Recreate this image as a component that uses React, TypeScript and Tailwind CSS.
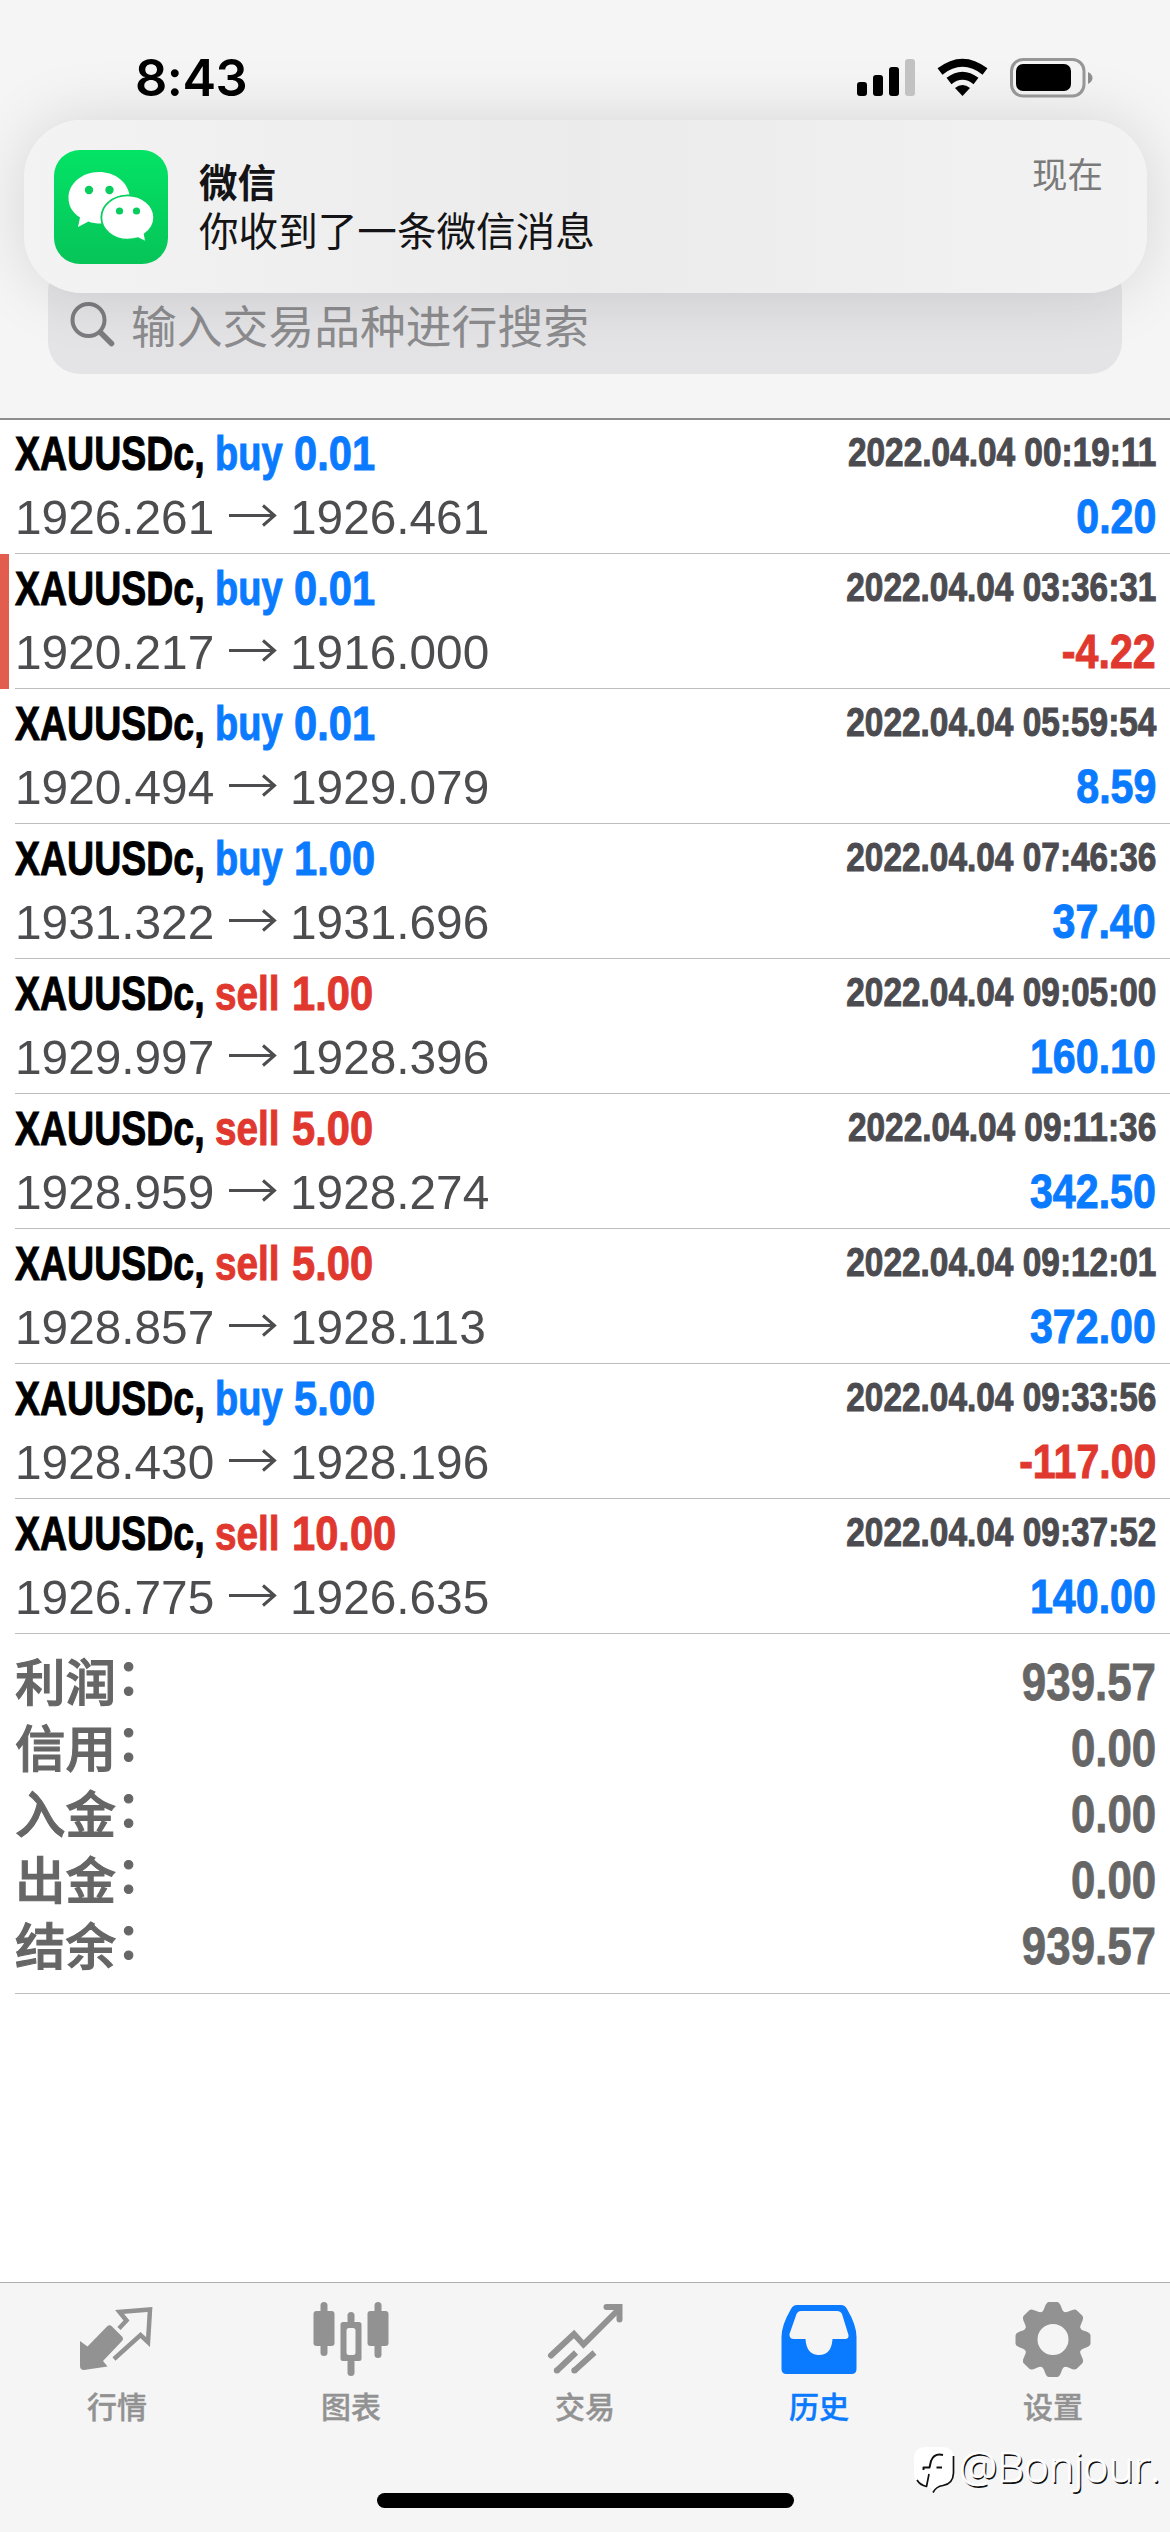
import type { ReactNode } from 'react';

type Trade = { side: 'buy' | 'sell'; lot: string; from: string; to: string; time: string; profit: string; flagged?: boolean };

const trades: Trade[] = [
  { side: 'buy', lot: '0.01', from: '1926.261', to: '1926.461', time: '2022.04.04 00:19:11', profit: '0.20' },
  { side: 'buy', lot: '0.01', from: '1920.217', to: '1916.000', time: '2022.04.04 03:36:31', profit: '-4.22', flagged: true },
  { side: 'buy', lot: '0.01', from: '1920.494', to: '1929.079', time: '2022.04.04 05:59:54', profit: '8.59' },
  { side: 'buy', lot: '1.00', from: '1931.322', to: '1931.696', time: '2022.04.04 07:46:36', profit: '37.40' },
  { side: 'sell', lot: '1.00', from: '1929.997', to: '1928.396', time: '2022.04.04 09:05:00', profit: '160.10' },
  { side: 'sell', lot: '5.00', from: '1928.959', to: '1928.274', time: '2022.04.04 09:11:36', profit: '342.50' },
  { side: 'sell', lot: '5.00', from: '1928.857', to: '1928.113', time: '2022.04.04 09:12:01', profit: '372.00' },
  { side: 'buy', lot: '5.00', from: '1928.430', to: '1928.196', time: '2022.04.04 09:33:56', profit: '-117.00' },
  { side: 'sell', lot: '10.00', from: '1926.775', to: '1926.635', time: '2022.04.04 09:37:52', profit: '140.00' },
];

const totals = [
  ['利润', '939.57'],
  ['信用', '0.00'],
  ['入金', '0.00'],
  ['出金', '0.00'],
  ['结余', '939.57'],
];

function StatusBar() {
  return (
    <div className="relative z-10 flex h-[120px] items-start justify-between pt-[58px] pr-[77px] pl-[135px]">
      <div className="font-['Inter'] text-[50.5px] leading-[39px] font-semibold tracking-[-0.5px]">8:43</div>
      <svg className="h-[40px] w-[236px]" viewBox="856 58 236 40">
        <rect x="856" y="82" width="10" height="14" rx="3" />
        <rect x="872" y="75" width="10" height="21" rx="3" />
        <rect x="888" y="67" width="10" height="29" rx="3" />
        <rect x="904" y="59" width="10" height="37" rx="3" fill="#c2c2c2" />
        <g fill="none" stroke="#000" strokeWidth="8">
          <path d="M939 71.5 Q961.5 54 984 71.5" />
          <path d="M948 81 Q961.5 70.5 975 81" />
        </g>
        <path d="M954 88 Q961.5 82 969 88 L961.5 96 Z" />
        <rect x="1010.5" y="59.5" width="72.5" height="36.5" rx="11.5" fill="none" stroke="#969696" strokeWidth="3" />
        <rect x="1015" y="64" width="55" height="27" rx="7" />
        <path d="M1087 72 Q1091.5 74.5 1091.5 78 Q1091.5 81.5 1087 84 Z" fill="#8d8d8d" />
      </svg>
    </div>
  );
}

function WeChatIcon() {
  return (
    <svg className="h-[114px] w-[114px] shrink-0" viewBox="0 0 114 114">
      <defs>
        <linearGradient id="wc" x1="0" y1="0" x2="0" y2="1">
          <stop offset="0" stopColor="#04e366" />
          <stop offset="1" stopColor="#06c458" />
        </linearGradient>
      </defs>
      <rect width="114" height="114" rx="26" fill="url(#wc)" />
      <path fill="#fff" d="M45 22 C28 22 14.5 33.5 14.5 48 C14.5 56.5 19 63 26 67.5 L24 77 L34.5 71.5 Q39.5 73.5 47.5 73.5 C43 57 57 44.5 75.5 44.5 C73 31 60 22 45 22 Z" />
      <path fill="#fff" stroke="#08cf5e" strokeWidth="1.5" d="M73.5 45.5 C59 45.5 47.5 55.5 47.5 67.5 C47.5 79.5 59 89.5 73.5 89.5 Q79 89.500 84 88 L92 92 L90.500 84 C96.5 80 100 74.5 100 67.5 C100 55.5 88 45.5 73.5 45.5 Z" />
      <g fill="#07cd5d">
        <circle cx="35" cy="40" r="4.2" />
        <circle cx="55.5" cy="40" r="4.2" />
        <circle cx="65.5" cy="61" r="3.6" />
        <circle cx="82.5" cy="61" r="3.6" />
      </g>
    </svg>
  );
}

function Banner() {
  return (
    <div className="absolute top-[120px] left-[24px] flex h-[173px] w-[1123px] rounded-[58px] bg-linear-to-r from-[#f3f3f4] via-[#ebebec] to-[#f3f3f4] pt-[30px] pr-[44px] pl-[30px] shadow-[0_0_64px_rgba(0,0,0,0.13)]">
      <WeChatIcon />
      <div className="ml-[31px] flex-1 pt-[9px] text-[39.6px] leading-[49px] text-[#141416]">
        <div className="text-[38.5px] font-bold">微信</div>
        <div>你收到了一条微信消息</div>
      </div>
      <div className="pt-[2px] text-[35.5px] leading-[49px] text-[#7a7a7a]">现在</div>
    </div>
  );
}

function SearchField() {
  return (
    <div className="mx-[48px] mt-[140px] flex h-[114px] items-end rounded-[32px] bg-[#e4e4e6] pb-[18px] pl-[22px]">
      <svg className="mb-[8px] h-[46px] w-[46px]" viewBox="0 0 46 46" fill="none" stroke="#7c7c80" strokeLinecap="round">
        <circle cx="18.5" cy="18" r="16" strokeWidth="4" />
        <path d="M30.5 30.5 L41.5 41.5" strokeWidth="5.5" />
      </svg>
      <div className="ml-[15px] text-[45.8px] leading-[54px] text-[#8c8c8f]">输入交易品种进行搜索</div>
    </div>
  );
}

function TradeRow({ trade }: { trade: Trade }) {
  const buy = trade.side === 'buy';
  const sideColor = buy ? 'text-[#0a7aff]' : 'text-[#e0382e]';
  const profitColor = trade.profit.startsWith('-') ? 'text-[#e0382e]' : 'text-[#0a7aff]';
  return (
    <div className="flex h-[135px]">
      <div className={trade.flagged ? 'w-[9px] bg-[#e35d4f]' : 'w-[9px]'} />
      <div className="ml-[6px] flex-1 border-b-[1.5px] border-[#bdbdc0] pr-[14px]">
        <div className="flex h-[69px] items-start justify-between text-[49px] leading-[56px] font-bold whitespace-nowrap [-webkit-text-stroke:1px_currentColor]">
          <div className="flex pt-[6px]">
            <span className="w-[200px]">
              <span className="inline-block origin-left scale-x-[0.765]">XAUUSDc,</span>
            </span>
            <span className={`flex ${sideColor}`}>
              <span className={buy ? 'w-[79px]' : 'w-[77px]'}>
                <span className={`inline-block origin-left ${buy ? 'scale-x-[0.775]' : 'scale-x-[0.79]'}`}>{trade.side}</span>
              </span>
              <span className="inline-block origin-left scale-x-[0.85]">{trade.lot}</span>
            </span>
          </div>
          <div className="origin-right scale-x-[0.835] pt-[5px] text-[40px] text-[#4b4b50]">{trade.time}</div>
        </div>
        <div className="flex justify-between text-[48.5px] leading-[58px]">
          <div className="flex items-center text-[#4d4d50]">
            <span className="w-[214px]">
              <span className="inline-block origin-left scale-x-[0.985]">{trade.from}</span>
            </span>
            <svg className="h-[26px] w-[48px]" viewBox="0 0 48 26" fill="none" stroke="#4d4d50" strokeWidth="3">
              <path d="M0 11.500 H46 M34 1.500 L45.5 11.500 L34 21.500" />
            </svg>
            <span className="ml-[13px] inline-block origin-left scale-x-[0.985]">{trade.to}</span>
          </div>
          <div className={`origin-right scale-x-[0.84] text-[49px] leading-[57px] font-bold [-webkit-text-stroke:1px_currentColor] ${profitColor}`}>{trade.profit}</div>
        </div>
      </div>
    </div>
  );
}

function Totals() {
  return (
    <div className="ml-[15px] h-[360px] border-b-[1.5px] border-[#bdbdc0] pt-[16px] pr-[14px] text-[50.5px] text-[#666]">
      {totals.map(([label, value]) => (
        <div key={label} className="flex h-[66px] items-start justify-between">
          <div className="-mt-[4px] flex font-['Noto_Sans_CJK_SC'] leading-[66px] font-medium [-webkit-text-stroke:1.1px_currentColor]">
            <span>{label}</span>
            <span className="-mt-[6px]">：</span>
          </div>
          <span className="origin-right scale-x-[0.86] text-[51px] leading-[66px] font-bold [-webkit-text-stroke:0.8px_currentColor]">{value}</span>
        </div>
      ))}
    </div>
  );
}

function Tab({ label, active, children }: { label: string; active?: boolean; children: ReactNode }) {
  return (
    <div className={`flex flex-1 flex-col items-center pt-[16px] ${active ? 'text-[#0a7aff]' : 'text-[#929292]'}`}>
      <svg className="h-[82px] w-[82px]" viewBox="0 0 82 82" fill="currentColor">
        {children}
      </svg>
      <div className="mt-[7px] text-[30px] leading-[40px] font-medium [-webkit-text-stroke:0.4px_currentColor]">{label}</div>
    </div>
  );
}

const gearTeeth = [0, 45, 90, 135, 180, 225, 270, 315];

function TabBar() {
  return (
    <div className="flex h-[250px] border-t-[1.5px] border-[#b0b0b2] bg-[#f5f5f5]">
      <Tab label="行情">
        <path d="M4 42 L11.5 47.5 L31 27.5 Q33.5 25 36 27.5 L46 37.5 Q48 40 46 42 L27 62 L31.5 67.5 L8 71 Q4 71 4 67 Z" />
        <path d="M43 29.5 L50.5 21.5 L43.5 13 L74 10.5 L72 43 L64.5 36 L38 60" fill="none" stroke="currentColor" strokeWidth="4.500" />
      </Tab>
      <Tab label="图表">
        <rect x="3.5" y="12" width="21" height="35" rx="3" />
        <rect x="10.5" y="3" width="7" height="54" rx="3.5" />
        <rect x="57.5" y="12" width="21" height="35" rx="3" />
        <rect x="64.5" y="3" width="7" height="56" rx="3.5" />
        <path fillRule="evenodd" d="M33 23 H49 Q51.5 23 51.5 25.5 V59.5 Q51.5 62 49 62 H33 Q30.5 62 30.5 59.5 V25.5 Q30.5 23 33 23 Z M39 29 Q36.5 29 36.5 31.5 V53.5 Q36.5 56 39 56 H43 Q45.5 56 45.5 53.5 V31.5 Q45.5 29 43 29 Z" />
        <rect x="37.5" y="13" width="7" height="12" rx="3.5" />
        <rect x="37.5" y="60" width="7" height="17" rx="3.5" />
      </Tab>
      <Tab label="交易">
        <g fill="none" stroke="currentColor" strokeWidth="6" strokeLinecap="round">
          <path d="M7 56.5 L30 35 L39.5 45.5 L75 10" strokeLinejoin="miter" />
          <path d="M62.5 8 H75.5 V20.5" />
        </g>
        <g fill="none" stroke="currentColor" strokeWidth="6">
          <path d="M12.5 72 L32 53.5 M30 72 L50.5 53.5" />
        </g>
        <circle cx="12.8" cy="71.5" r="3" />
        <circle cx="30.3" cy="71.5" r="3" />
      </Tab>
      <Tab label="历史" active>
        <path fillRule="evenodd" d="M19 6 H63 Q67 6 69 10 Q78.5 26 78.5 38 V70 Q78.5 75 73.5 75 H8.5 Q3.5 75 3.5 70 V38 Q3.5 26 13 10 Q15 6 19 6 Z M23 12 Q20 12 18.5 15 L11.5 35 Q11 40 16 40 H27.5 Q28.5 56 41 56 Q53.5 56 54.5 40 H67 Q71 40 70.5 36 L64 15 Q62.5 12 59 12 Z" />
      </Tab>
      <Tab label="设置">
        <g stroke="currentColor" strokeLinejoin="round" strokeWidth="3">
          {gearTeeth.map((a) => (
            <path key={a} d="M29 15.5 Q32.5 14 34 9 Q35.5 4.5 37 4.5 H45 Q46.5 4.5 48 9 Q49.5 14 53 15.5 L41 22 Z" transform={`rotate(${a} 41 40.5)`} />
          ))}
        </g>
        <circle cx="41" cy="40.5" r="22.5" fill="none" stroke="currentColor" strokeWidth="14" />
      </Tab>
    </div>
  );
}

function Watermark() {
  return (
    <div className="absolute top-[2438px] left-[914px] flex items-start whitespace-nowrap">
      <svg className="mt-[9px] h-[50px] w-[42px]" viewBox="0 0 42 50" fill="none" stroke="#111" strokeLinejoin="round">
        <path d="M12 0 H28 Q40 0 40 12 V26 Q40 37 29 39 Q22 40 19 46 L17 41 L12 40 Q0 38 0 26 V12 Q0 0 12 0 Z" fill="#fff" stroke="none" />
        <path d="M39.5 9 V26 Q39 37 29 38.5 Q22 39.5 19 45.5 M3 33 Q6 38 12.5 39.5 L15 27" strokeWidth="1.7" />
        <path d="M29 8 Q20 6 17 14 L15.5 20.5 H9.5 V23 M22.5 20.5 H28" strokeWidth="2" />
      </svg>
      <span className="ml-[3px] font-['Open_Sans'] text-[43px] leading-[56px] font-light tracking-[-0.2px] text-white [-webkit-text-stroke:0.6px_#fff] [text-shadow:1.5px_1.5px_0_#111]">@Bonjour.</span>
    </div>
  );
}

export default function App() {
  return (
    <div className="relative flex h-[2532px] w-[1170px] flex-col overflow-hidden bg-white font-['Liberation_Sans','Noto_Sans_CJK_SC',sans-serif] text-black">
      <header className="relative h-[420px] shrink-0 overflow-hidden border-b-2 border-[#8e8e90] bg-[#f5f5f5]">
        <StatusBar />
        <SearchField />
        <Banner />
      </header>
      <main className="-mt-px flex-1">
        {trades.map((t) => (
          <TradeRow key={t.time} trade={t} />
        ))}
        <Totals />
      </main>
      <TabBar />
      <div className="absolute top-[2493px] left-[377px] h-[15px] w-[417px] rounded-full bg-black" />
      <Watermark />
    </div>
  );
}
